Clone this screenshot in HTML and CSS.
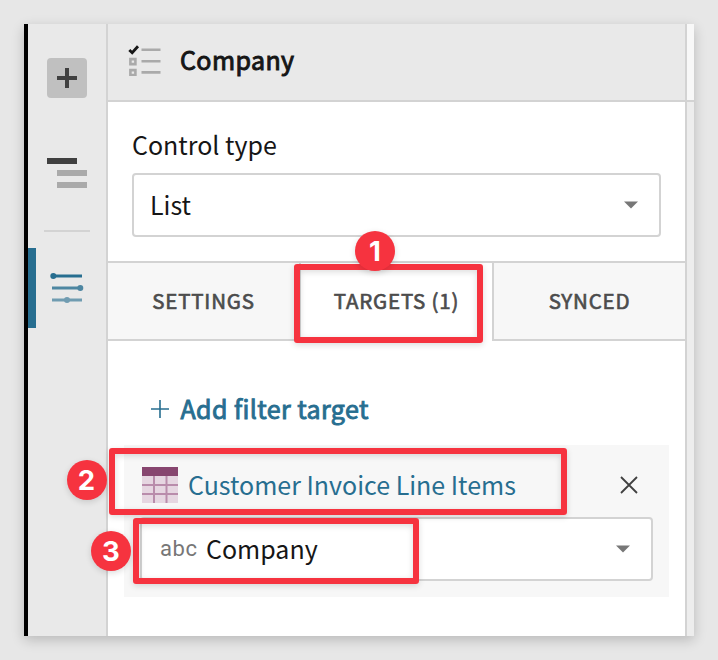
FILE: index.html
```html
<!DOCTYPE html>
<html lang="en">
<head>
<meta charset="utf-8">
<title>Company control</title>
<link rel="stylesheet" href="styles.css">
</head>
<body>
<div class="window">
  <nav class="rail">
    <div class="add"><svg width="20" height="20"><path d="M0 10H20M10 0V20" stroke="#404040" stroke-width="4"/></svg></div>
    <svg class="layers" width="40" height="30"><path fill="#404040" d="M0 0h30v6H0z"/><path fill="#aaa" d="M10 12h30v6H10zM10 24h30v6H10z"/></svg>
    <div class="rule"></div>
    <div class="active">
      <svg width="34" height="30" viewBox="0 0 34 30"><g fill="#276e90" stroke="#276e90" stroke-width="3"><g><path d="M2 3H32"/><circle cx="3.3" cy="3" r="3" stroke="none"/></g><g opacity=".8"><path d="M2 15H32"/><circle cx="30.3" cy="15" r="3" stroke="none"/></g><g opacity=".62"><path d="M2 27H32"/><circle cx="17" cy="27" r="3" stroke="none"/></g></g></svg>
    </div>
  </nav>
  <main class="panel">
    <header class="head">
      <svg width="34" height="32" viewBox="0 0 34 32"><path d="M1.3 5.9L4.2 8.7L10 2.2" fill="none" stroke="#161616" stroke-width="2.8"/><path d="M2.4 15.1h5v5h-5zM2.4 26.1h5v5h-5z" fill="none" stroke="#aaa" stroke-width="2.6"/><path d="M13.5 5.8h19M13.5 17.2h19M13.5 28.4h19" stroke="#aaa" stroke-width="2.6"/></svg>
      <h1>Company</h1>
    </header>
    <section class="type">
      <label>Control type</label>
      <div class="select"><span>List</span><svg class="caret" width="14" height="8"><path d="M0 0.5H14L7 7.5z" fill="#777"/></svg></div>
    </section>
    <div class="tabs">
      <div class="tab"><span>SETTINGS</span></div>
      <div class="tab on"><span>TARGETS (1)</span></div>
      <div class="tab"><span>SYNCED</span></div>
    </div>
    <section class="targets">
      <div class="addfilter"><svg width="18" height="18"><path d="M0 9H18M9 0V18" stroke="#276e90" stroke-width="1.6"/></svg><span>Add filter target</span></div>
      <div class="card">
        <div class="source">
          <svg width="36" height="36"><path fill="#e6d6e1" d="M0 0h36v36H0z"/><path d="M0 18h36M0 27h36M12 9v27M24.5 9v27" stroke="#b98cab" stroke-width="2"/><path fill="#87456f" d="M0 0h36v9H0z"/></svg>
          <span>Customer Invoice Line Items</span>
          <svg class="close" width="18" height="18"><path d="M1 1L17 17M17 1L1 17" stroke="#404040" stroke-width="1.8"/></svg>
        </div>
        <div class="select field"><span class="abc">abc</span><span>Company</span><svg class="caret" width="14" height="8"><path d="M0 0.5H14L7 7.5z" fill="#777"/></svg></div>
      </div>
    </section>
  </main>
  <aside class="edge"><div class="edge-top"></div></aside>
</div>
<div class="mark m1"></div><div class="mark m2"></div><div class="mark m3"></div>
<div class="num n1">1</div><div class="num n2">2</div><div class="num n3">3</div>
</body>
</html>
```
FILE: styles.css
```css
* { box-sizing: border-box; }
body { margin: 0; height: 660px; padding: 24px; background: #e7e7e7; overflow: hidden; position: relative; font-family: "Noto Sans CJK SC", "Noto Sans", sans-serif; font-size: 25px; line-height: 36px; color: #161616; }
svg { display: block; flex: none; }
span, label, h1 { white-space: nowrap; }
.window { display: flex; width: 670px; height: 612px; background: #fff; box-shadow: 0 4px 12px rgba(0,0,0,.2); }
.rail { flex: none; width: 84px; background: #e9e9e9; border-left: 4px solid #000; border-right: 2px solid #d3d3d3; display: flex; flex-direction: column; }
.add { width: 40px; height: 40px; margin: 34px 0 0 19px; border-radius: 4px; background: #c0c0c0; display: flex; align-items: center; justify-content: center; }
.layers { margin: 60px 0 0 19px; }
.rule { width: 46px; height: 2px; background: #d3d3d3; margin: 42px 0 0 16px; }
.active { height: 80px; margin-top: 16px; border-left: 8px solid #276e90; padding: 25px 0 0 14px; }
.panel { flex: none; width: 577px; }
.edge { flex: 1; border-left: 2px solid #d3d3d3; background: #ededed; }
.edge-top { height: 78px; background: #f8f8f8; border-bottom: 2px solid #d3d3d3; }
.head { height: 78px; background: #e9e9e9; border-bottom: 2px solid #d3d3d3; display: flex; align-items: center; padding: 0 0 4px 20px; gap: 18px; }
h1 { margin: 0; padding-bottom: 2px; font-size: 25px; font-weight: 400; -webkit-text-stroke: .95px; letter-spacing: .4px; }
.type { height: 159px; padding: 24px 24px 0; }
.type label { display: block; height: 47px; }
.select { height: 64px; width: 529px; border: 2px solid #d3d3d3; border-radius: 4px; background: #fff; display: flex; align-items: center; padding: 0 21px 0 16px; }
.select span { padding-bottom: 2px; }
.caret { margin-left: auto; }
.tabs { height: 80px; display: flex; border-top: 2px solid #d3d3d3; }
.tab { flex: 1; display: flex; align-items: center; justify-content: center; padding-bottom: 2px; background: #f7f7f7; border-bottom: 2px solid #d3d3d3; color: #4c4c4c; font-size: 20.5px; font-weight: 400; -webkit-text-stroke: .65px; letter-spacing: .8px; }
.tab.on { background: #fff; border-bottom-color: #fff; border-left: 2px solid #d3d3d3; }
.tab.on + .tab { border-left: 2px solid #d3d3d3; }
.targets { padding: 50px 16px 0; }
.addfilter { display: flex; align-items: center; height: 36px; padding-left: 27px; gap: 11.5px; color: #276e90; -webkit-text-stroke: .9px; letter-spacing: .42px; }
.addfilter span { padding-bottom: 2px; }
.card { margin-top: 18px; height: 152px; width: 545px; background: #f7f7f7; padding: 0 16px; }
.source { height: 72px; display: flex; align-items: center; padding: 8px 15px 0 2px; gap: 10px; color: #276e90; }
.source span { padding-bottom: 2px; }
.close { margin-left: auto; }
.field { width: 513px; padding-left: 18px; }
.select .abc { font: 22px/30px Roboto, sans-serif; color: #777; width: 46px; padding-bottom: 0; letter-spacing: .6px; }
.mark { position: absolute; border: 6px solid #f6333f; border-radius: 3px; box-shadow: 0 2px 6px rgba(0,0,0,.14), inset 0 2px 6px rgba(0,0,0,.14); }
.m1 { left: 294px; top: 264px; width: 189px; height: 79px; }
.m2 { left: 108.5px; top: 448px; width: 458px; height: 67px; }
.m3 { left: 132.5px; top: 518px; width: 286px; height: 66px; }
.num { position: absolute; width: 40px; height: 40px; border-radius: 50%; background: #f6333f; color: #fff; font: 700 27.5px/40px Inter, sans-serif; text-align: center; box-shadow: 0 2px 6px rgba(0,0,0,.14); }
.n1 { left: 355px; top: 231px; }
.n2 { left: 66.5px; top: 460px; }
.n3 { left: 91px; top: 531px; }
```
